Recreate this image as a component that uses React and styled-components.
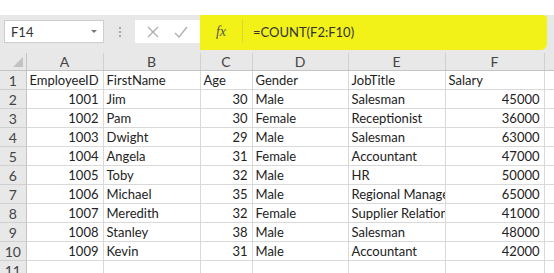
import React from "react";
import styled, { createGlobalStyle } from "styled-components";

const GlobalStyle = createGlobalStyle`
  body {
    margin: 0;
    background: #ffffff;
    overflow: hidden;
    font-family: "Lato", "Liberation Sans", sans-serif;
  }
`;

const Page = styled.div`
  width: 554px;
  height: 273px;
  padding-top: 15px;
  box-sizing: border-box;
  overflow: hidden;
`;

const Toolbar = styled.div`
  height: 38px;
  background: #e8e8e8;
  display: flex;
  align-items: flex-start;
  padding: 5px 0 0 4px;
  box-sizing: border-box;
`;

const NameBox = styled.div`
  width: 100px;
  height: 23px;
  background: #fff;
  border: 1px solid #cdcdcd;
  box-sizing: border-box;
  display: flex;
  align-items: center;
  justify-content: space-between;
  padding: 0 6px 0 6px;
  font-size: 13px;
  color: #333;
`;

const Arrow = styled.span`
  width: 0;
  height: 0;
  border-left: 3px solid transparent;
  border-right: 3px solid transparent;
  border-top: 3px solid #777;
`;

const Dots = styled.div`
  width: 31px;
  height: 23px;
  display: flex;
  flex-direction: column;
  align-items: center;
  justify-content: center;
  gap: 2px;
  & span {
    width: 2px;
    height: 2px;
    background: #a8a8a8;
  }
`;

const ActionBox = styled.div`
  width: 65px;
  height: 23px;
  background: #fff;
  display: flex;
  align-items: center;
  justify-content: space-around;
  padding: 0 4px;
  box-sizing: border-box;
`;

const Highlight = styled.div`
  flex: 1;
  margin-top: -5px;
  margin-right: 7px;
  height: 33px;
  background: #f2f218;
  display: flex;
  align-items: center;
  border-radius: 0 4px 6px 0;
  box-shadow: 0 2px 0 #f2f218;
`;

const FxBox = styled.div`
  width: 42px;
  height: 23px;
  display: flex;
  align-items: center;
  justify-content: center;
  border-right: 1px solid #d9d92a;
  font-family: "Liberation Serif", serif;
  font-style: italic;
  font-size: 14px;
  color: #555;
`;

const FormulaText = styled.div`
  padding-left: 10px;
  font-size: 13px;
  color: #333;
`;

const Sheet = styled.table`
  border-collapse: collapse;
  table-layout: fixed;
  width: 570px;
  font-size: 13px;
  color: #222;
`;

const ColHead = styled.th`
  height: 17px;
  padding: 0;
  background: #e8e8e8;
  border-right: 1px solid #d0d0d0;
  border-bottom: 1px solid #c4c4c4;
  font-weight: normal;
  font-size: 14px;
  color: #444;
  text-align: center;
  line-height: 16px;
`;

const Corner = styled.th`
  height: 17px;
  padding: 0;
  background: #e8e8e8;
  border-right: 1px solid #c4c4c4;
  border-bottom: 1px solid #c4c4c4;
  position: relative;
  &::after {
    content: "";
    position: absolute;
    right: 3px;
    bottom: 3px;
    border-left: 10px solid transparent;
    border-bottom: 10px solid #c2c2c2;
  }
`;

const RowHead = styled.td`
  height: 18px;
  padding: 0;
  background: #e8e8e8;
  border-right: 1px solid #c4c4c4;
  border-bottom: 1px solid #d0d0d0;
  text-align: center;
  font-size: 14px;
  color: #444;
`;

const Cell = styled.td`
  height: 18px;
  padding: 0 ${(p) => (p.$num ? "4px" : "3px")} 0 3px;
  border-right: 1px solid #d9d9d9;
  border-bottom: 1px solid #d9d9d9;
  white-space: nowrap;
  overflow: hidden;
  text-align: ${(p) => (p.$num ? "right" : "left")};
`;

const widths = [26, 77, 97, 52, 96, 97, 99, 26];
const letters = ["A", "B", "C", "D", "E", "F", ""];

const rows = [
  ["EmployeeID", "FirstName", "Age", "Gender", "JobTitle", "Salary"],
  [1001, "Jim", 30, "Male", "Salesman", 45000],
  [1002, "Pam", 30, "Female", "Receptionist", 36000],
  [1003, "Dwight", 29, "Male", "Salesman", 63000],
  [1004, "Angela", 31, "Female", "Accountant", 47000],
  [1005, "Toby", 32, "Male", "HR", 50000],
  [1006, "Michael", 35, "Male", "Regional Manager", 65000],
  [1007, "Meredith", 32, "Female", "Supplier Relations", 41000],
  [1008, "Stanley", 38, "Male", "Salesman", 48000],
  [1009, "Kevin", 31, "Male", "Accountant", 42000],
  ["", "", "", "", "", ""],
];

function App() {
  return (
    <Page>
      <GlobalStyle />
      <Toolbar>
        <NameBox>
          F14
          <Arrow />
        </NameBox>
        <Dots>
          <span />
          <span />
          <span />
        </Dots>
        <ActionBox>
          <svg width="14" height="14" viewBox="0 0 14 14">
            <path d="M2 2 L12 12 M12 2 L2 12" stroke="#b0b0b0" strokeWidth="1.4" fill="none" />
          </svg>
          <svg width="16" height="14" viewBox="0 0 16 14">
            <path d="M2 8 L6 12 L14 2" stroke="#b0b0b0" strokeWidth="1.4" fill="none" />
          </svg>
        </ActionBox>
        <Highlight>
          <FxBox>fx</FxBox>
          <FormulaText>=COUNT(F2:F10)</FormulaText>
        </Highlight>
      </Toolbar>
      <Sheet>
        <colgroup>
          {widths.map((w, i) => (
            <col key={i} style={{ width: w }} />
          ))}
        </colgroup>
        <thead>
          <tr>
            <Corner />
            {letters.map((l, i) => (
              <ColHead key={i}>{l}</ColHead>
            ))}
          </tr>
        </thead>
        <tbody>
          {rows.map((r, ri) => (
            <tr key={ri}>
              <RowHead>{ri + 1}</RowHead>
              {r.map((v, ci) => (
                <Cell key={ci} $num={typeof v === "number"}>
                  {v}
                </Cell>
              ))}
              <Cell />
            </tr>
          ))}
        </tbody>
      </Sheet>
    </Page>
  );
}

export default App;
